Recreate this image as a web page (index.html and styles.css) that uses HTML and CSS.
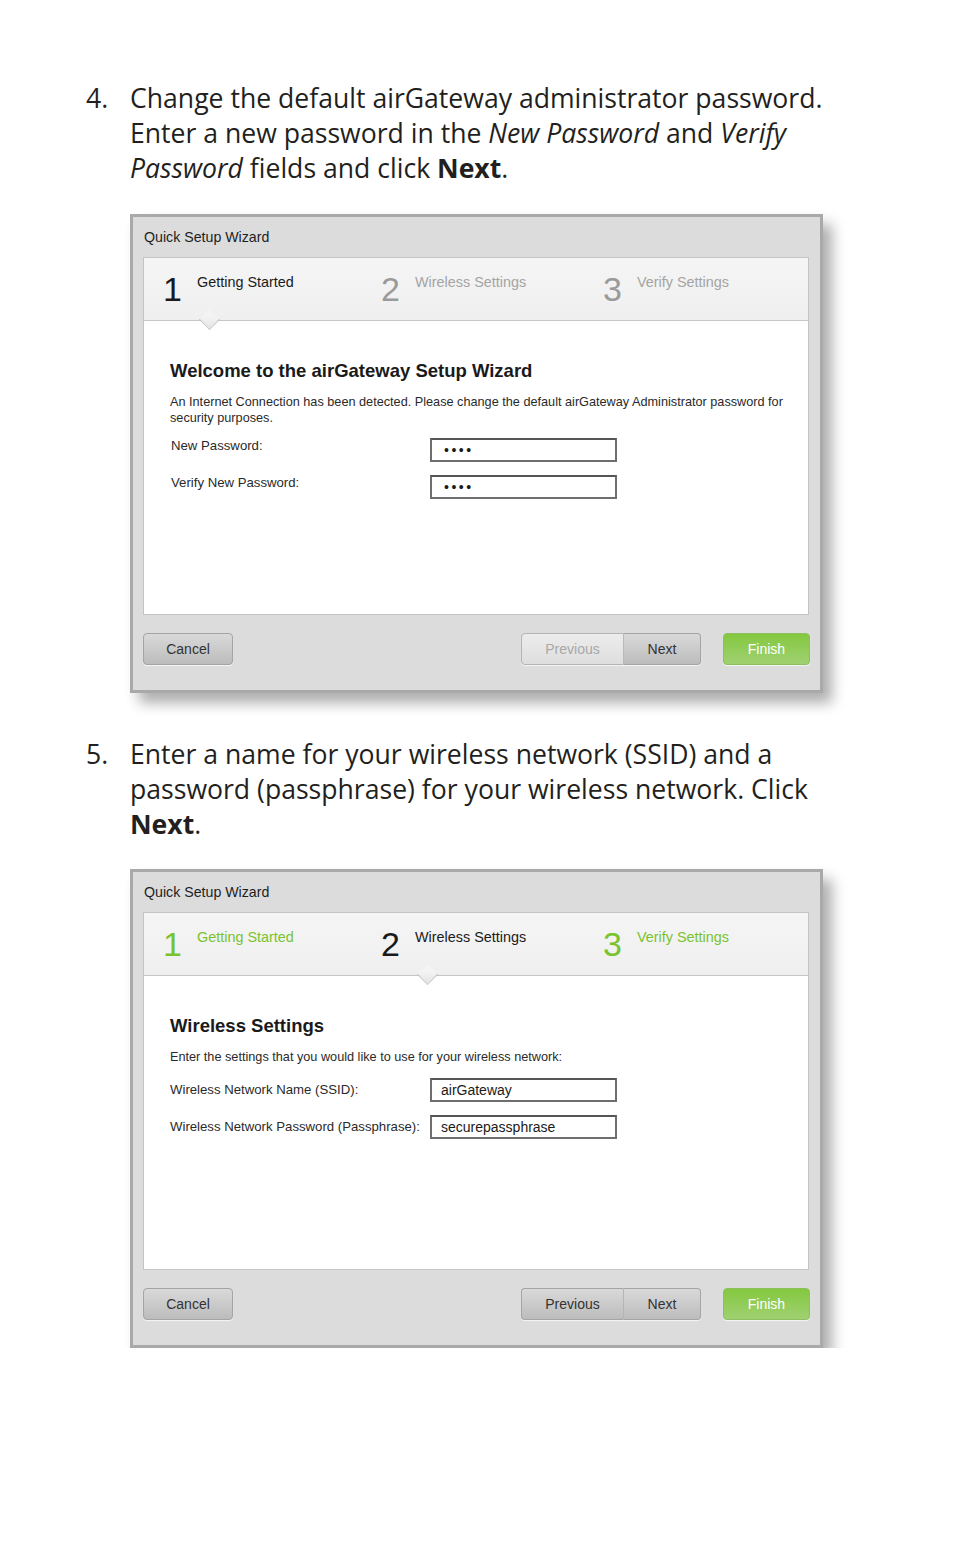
FILE: index.html
```html
<!DOCTYPE html>
<html lang="en">
<head>
<meta charset="utf-8">
<title>airGateway Quick Setup</title>
<link rel="stylesheet" href="styles.css">
</head>
<body>
<div class="page">
  <p class="instr first"><span class="inum">4.</span><span class="itxt">Change the default airGateway administrator password.<br>Enter a new password in the <em>New Password</em> and <em>Verify</em><br><em>Password</em> fields and click <b>Next</b>.</span></p>

  <div class="wizard">
    <div class="wz-title">Quick Setup Wizard</div>
    <div class="wz-panel">
      <div class="wz-steps">
        <div class="wz-step current"><span class="sn">1</span><span class="sl">Getting Started</span></div>
        <div class="wz-step"><span class="sn">2</span><span class="sl">Wireless Settings</span></div>
        <div class="wz-step"><span class="sn">3</span><span class="sl">Verify Settings</span></div>
      </div>
      <div class="wz-body">
        <h2 class="wz-h">Welcome to the airGateway Setup Wizard</h2>
        <p class="wz-p">An Internet Connection has been detected. Please change the default airGateway Administrator password for security purposes.</p>
        <div class="wz-form">
          <div class="wz-label">New Password:</div>
          <div class="wz-input dots">&#8226;&#8226;&#8226;&#8226;</div>
          <div class="wz-label">Verify New Password:</div>
          <div class="wz-input dots">&#8226;&#8226;&#8226;&#8226;</div>
        </div>
      </div>
    </div>
    <div class="wz-buttons">
      <div class="btn cancel">Cancel</div>
      <div class="spacer"></div>
      <div class="btn-group">
        <div class="btn prev disabled">Previous</div>
        <div class="btn next">Next</div>
      </div>
      <div class="btn finish">Finish</div>
    </div>
  </div>

  <p class="instr second"><span class="inum">5.</span><span class="itxt">Enter a name for your wireless network (SSID) and a<br>password (passphrase) for your wireless network. Click<br><b>Next</b>.</span></p>

  <div class="wizard">
    <div class="wz-title">Quick Setup Wizard</div>
    <div class="wz-panel">
      <div class="wz-steps">
        <div class="wz-step done"><span class="sn">1</span><span class="sl">Getting Started</span></div>
        <div class="wz-step current"><span class="sn">2</span><span class="sl">Wireless Settings</span></div>
        <div class="wz-step done"><span class="sn">3</span><span class="sl">Verify Settings</span></div>
      </div>
      <div class="wz-body">
        <h2 class="wz-h">Wireless Settings</h2>
        <p class="wz-p">Enter the settings that you would like to use for your wireless network:</p>
        <div class="wz-form centered">
          <div class="wz-label">Wireless Network Name (SSID):</div>
          <div class="wz-input txt">airGateway</div>
          <div class="wz-label">Wireless Network Password (Passphrase):</div>
          <div class="wz-input txt">securepassphrase</div>
        </div>
      </div>
    </div>
    <div class="wz-buttons">
      <div class="btn cancel">Cancel</div>
      <div class="spacer"></div>
      <div class="btn-group">
        <div class="btn prev">Previous</div>
        <div class="btn next">Next</div>
      </div>
      <div class="btn finish">Finish</div>
    </div>
  </div>
</div>
</body>
</html>
```

FILE: styles.css
```css
html, body {
  margin: 0;
  padding: 0;
  background: #ffffff;
}

.page {
  width: 954px;
  padding-top: 81px;
  box-sizing: border-box;
}

.instr {
  display: flex;
  margin: 0 0 0 86px;
  font-family: "Open Sans", "Noto Sans", sans-serif;
  font-size: 26.6px;
  line-height: 35px;
  letter-spacing: 0;
  color: #231f20;
}

.instr .inum {
  width: 44px;
  flex: none;
}

.instr b {
  font-weight: 700;
}

.instr.second {
  margin-top: 44px;
}

.wizard {
  width: 693px;
  margin-left: 130px;
  box-sizing: border-box;
  border: 3px solid #a9a9a9;
  background: #dcdcdc;
  box-shadow: 9px 10px 13px rgba(0, 0, 0, 0.32);
  padding: 0 11px 0 10px;
  font-family: "Liberation Sans", Arial, sans-serif;
  color: #222;
}

.instr.first + .wizard {
  margin-top: 28px;
}

.instr.second + .wizard {
  margin-top: 27px;
}

.wz-title {
  height: 40px;
  line-height: 40px;
  font-size: 14.2px;
  padding-left: 1px;
  color: #1e1e1e;
}

.wz-panel {
  border: 1px solid #c4c4c4;
  background: #ffffff;
  height: 358px;
  box-sizing: border-box;
}

.wz-steps {
  height: 63px;
  box-sizing: border-box;
  border-bottom: 1px solid #c6c6c6;
  background: linear-gradient(#f5f5f5, #efefef);
  display: grid;
  grid-template-columns: 218px 222px 1fr;
  padding-left: 19px;
}

.wz-step {
  position: relative;
  display: flex;
  align-items: flex-start;
  padding-top: 14px;
  color: #9e9e9e;
}

.wz-step .sn {
  font-size: 34px;
  line-height: 34px;
  font-weight: 300;
  width: 34px;
  flex: none;
  color: #9a9a9a;
}

.wz-step .sl {
  font-size: 14.4px;
  line-height: 16px;
  padding-top: 2px;
  color: #a4a4a4;
}

.wz-step.current .sn {
  color: #1a1a1a;
}

.wz-step.current .sl {
  color: #1a1a1a;
}

.wz-step.done .sn,
.wz-step.done .sl {
  color: #79c32d;
}

.wz-step.current::after {
  content: "";
  position: absolute;
  left: 39px;
  bottom: -7px;
  width: 14px;
  height: 14px;
  background: linear-gradient(135deg, #f3f3f3 40%, #e4e4e4);
  border-right: 1px solid #c6c6c6;
  border-bottom: 1px solid #c6c6c6;
  transform: rotate(45deg);
}

.wz-body {
  padding: 38px 16px 0 26px;
}

.wz-h {
  margin: 0;
  font-size: 18.5px;
  line-height: 23px;
  font-weight: 700;
  color: #1a1a1a;
}

.wz-p {
  margin: 12px 0 0 0;
  font-size: 12.7px;
  line-height: 16px;
  color: #2a2a2a;
}

.wz-form {
  display: grid;
  grid-template-columns: 260px 187px;
  row-gap: 13px;
  margin-top: 12px;
}

.wz-form.centered {
  margin-top: 13px;
  align-items: center;
}

.wz-label {
  font-size: 13.2px;
  line-height: 16px;
  padding-left: 1px;
  color: #2a2a2a;
}

.wz-form.centered .wz-label {
  padding-left: 0;
}

.wz-input {
  height: 24px;
  box-sizing: border-box;
  border: 2px solid #6e6e6e;
  border-top-color: #555;
  background: #fff;
  font-size: 14px;
  line-height: 20px;
  color: #1a1a1a;
}

.wz-input.dots {
  padding-left: 12px;
  font-size: 14px;
  letter-spacing: 2.5px;
  line-height: 21px;
}

.wz-input.txt {
  padding-left: 9px;
}

.wz-buttons {
  display: flex;
  align-items: flex-start;
  padding-top: 18px;
  height: 75px;
  box-sizing: border-box;
}

.spacer {
  flex: 1;
}

.btn {
  height: 32px;
  box-sizing: border-box;
  border: 1px solid #a4a4a4;
  border-radius: 4px;
  font-size: 14px;
  line-height: 30px;
  text-align: center;
  color: #333;
  background: linear-gradient(#d9d9d9, #bcbcbc);
  box-shadow: 0 1px 1px rgba(255, 255, 255, 0.7);
}

.btn.cancel {
  width: 90px;
}

.btn-group {
  display: flex;
  margin-right: 22px;
}

.btn-group .btn.prev {
  width: 103px;
  border-radius: 4px 0 0 4px;
  border-right: 1px solid #b0b0b0;
}

.btn-group .btn.next {
  width: 77px;
  border-radius: 0 4px 4px 0;
  border-left: none;
}

.btn.prev.disabled {
  background: linear-gradient(#ececec, #dedede);
  color: #a8a8a8;
  border-color: #b4b4b4;
}

.btn.finish {
  width: 87px;
  margin-right: -1px;
  color: #ffffff;
  border-color: #8cbf5d;
  background: linear-gradient(#84c83f, #a0d172);
}
```
